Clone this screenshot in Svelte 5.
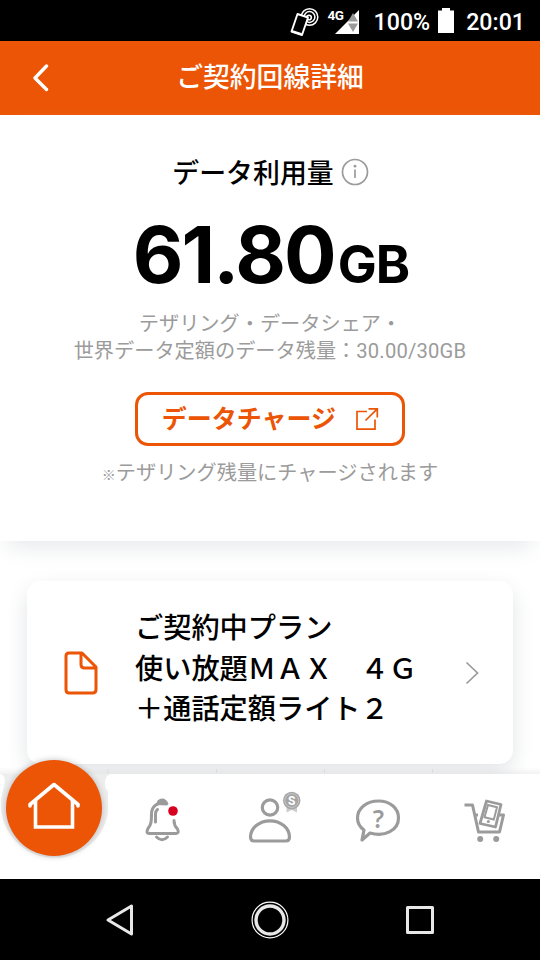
<script lang="ts">
  const usage = { amount: '61.80', unit: 'GB', remaining: '30.00/30GB' };
  const planLines = ['ご契約中プラン', '使い放題ＭＡＸ　４Ｇ', '＋通話定額ライト２'];
  const tabs = ['home', 'notice', 'account', 'support', 'shop'];
</script>

<div class="screen">
  <div class="status">
    <svg class="st-nfc" width="30" height="30" viewBox="0 0 30 30" fill="none" stroke="#fff">
      <circle cx="20.500" cy="11" r="8.300" stroke-width="1.500" />
      <circle cx="20.500" cy="11" r="5.400" stroke-width="1.500" />
      <circle cx="20" cy="11.500" r="2.300" stroke-width="1.600" />
      <path d="M8.500 8 19 11.500 13 29 2.500 25.500Z" fill="#000" stroke-width="1.900" stroke-linejoin="round" />
      <path d="M3 24 14 27.500 13 29.500 2.500 26.300Z" fill="#fff" stroke="none" />
    </svg>
    <span class="net">4G</span>
    <svg class="st-signal" width="24" height="24" viewBox="0 0 24 24">
      <path d="M0 24 24 0V24Z" fill="#fff" />
      <path d="M18 3 23 11.500H13ZM18 22 23 13.500H13Z" fill="#9a9a9a" />
    </svg>
    <span class="pct">100%</span>
    <svg class="st-battery" width="16" height="25" viewBox="0 0 16 25">
      <path d="M4 0H12V2.5H16V25H0V2.5H4Z" fill="#fff" />
    </svg>
    <span class="clock">20:01</span>
  </div>

  <header>
    <svg class="back" width="18" height="28" viewBox="0 0 18 28">
      <path d="M14.5 2 3 14 14.5 25.5" fill="none" stroke="#fff" stroke-width="3.4" stroke-linecap="round" stroke-linejoin="round" />
    </svg>
    <h1>ご契約回線詳細</h1>
  </header>

  <main>
    <section class="usage">
      <h2>
        <span>データ利用量</span>
        <svg width="28" height="28" viewBox="0 0 28 28" fill="none" stroke="#9b9b9b" stroke-width="1.7">
          <circle cx="14" cy="14" r="12.5" />
          <path d="M14 11.5V20" />
          <circle cx="14" cy="8.2" r="1.4" fill="#9b9b9b" stroke="none" />
        </svg>
      </h2>
      <p class="amount"><span class="value">{usage.amount}</span><span class="unit">{usage.unit}</span></p>
      <p class="sub">
        テザリング・データシェア・<br />世界データ定額のデータ残量：<span class="remain">{usage.remaining}</span>
      </p>
      <button class="charge">
        <span>データチャージ</span>
        <svg width="24" height="24" viewBox="0 0 24 24" fill="none" stroke="#eb5505" stroke-width="1.7">
          <path d="M12 4.5H2V22.2H20V12.5M13.5 1.8H22.3V10.5M22.3 1.8 10.5 13.5" />
        </svg>
      </button>
      <p class="note"><span class="mark">※</span>テザリング残量にチャージされます</p>
    </section>

    <section class="plan">
      <svg class="doc" width="34" height="44" viewBox="0 0 34 44" fill="none" stroke="#eb5505" stroke-width="3" stroke-linejoin="round">
        <path d="M5 2H18L32 16V38.5Q32 42 28.500 42H5Q2 42 2 38.500V5Q2 2 5 2ZM17 2V13.500Q17 17 20.500 17H32" />
      </svg>
      <p>
        {#each planLines as line}
          <span class="plan-line">{line}</span>
        {/each}
      </p>
      <svg class="chevron" width="14" height="24" viewBox="0 0 14 24">
        <path d="M1.500 1.500 12.500 12 1.500 22.500" fill="none" stroke="#9b9b9b" stroke-width="1.7" />
      </svg>
    </section>

    <nav>
      <svg class="nav-bg" width="540" height="126" viewBox="0 0 540 126">
        <defs>
          <linearGradient id="edge" x1="0" y1="0" x2="0" y2="1">
            <stop offset="0" stop-color="#000" stop-opacity="0" />
            <stop offset="1" stop-color="#000" stop-opacity="0.05" />
          </linearGradient>
        </defs>
        <path d="M0 14H540V21H0Z" fill="url(#edge)" />
        <path d="M108 16V20M216.500 16V20M324.500 16V20M432.500 16V20" stroke="#dcdddd" />
        <path d="M0 21H540V126H0Z" fill="#fff" />
        <path d="M0 21Q5 22 5 28L1 46A54 54 0 0 0 108 60V38Q105 36 105 30Q105 22 111 21Z" fill="#ededee" />
      </svg>
      {#each tabs as tab}
        <button class="tab {tab}" aria-label={tab}>
          {#if tab === 'home'}
            <span class="disc">
              <svg width="54" height="48" viewBox="0 0 54 48" fill="none" stroke="#fff" stroke-width="3.6">
                <path d="M3 24V22.500L27 2.500 51 22.500V24" stroke-linejoin="round" stroke-linecap="round" />
                <path d="M8.500 19V45H45.500V19" />
              </svg>
            </span>
          {:else if tab === 'notice'}
            <svg width="40" height="48" viewBox="0 0 40 48" fill="none" stroke="#9b9b9b" stroke-width="3" stroke-linecap="round">
              <path d="M24 6.500C16 4.500 9.500 9 9.500 17C9.500 25 9 28 6 31.500Q3.500 36.500 7 36.500H34Q37.500 36.500 35.500 32C33 29.500 32 27.500 32 23.500" />
              <path d="M14 8Q15 1.500 20 1.500Q24.500 1.500 26.500 7L25 8.500Z" fill="#9b9b9b" stroke="none" />
              <path d="M13.500 25V17Q13.500 14 15.500 12.500M14.500 40Q20 45.500 25.500 40" />
              <circle cx="31" cy="14" r="4.800" fill="#d7001e" stroke="none" />
            </svg>
          {:else if tab === 'account'}
            <svg width="54" height="54" viewBox="0 0 54 54" fill="none" stroke="#9b9b9b" stroke-width="3.200">
              <circle cx="22" cy="17.500" r="7.700" />
              <path d="M6 51Q2.500 51 2.500 47A19.500 16.200 0 0 1 41.500 47Q41.500 51 38 51Z" stroke-linejoin="round" />
              <path d="M38.500 16V22.500L43.700 20 49 22.500V16Z" fill="#ccc" stroke="none" />
              <circle cx="43.700" cy="10.500" r="8.700" fill="#a5a5a5" stroke="none" />
              <circle cx="43.700" cy="10.500" r="6.900" stroke="#d0d0d0" stroke-width="0.800" />
              <text x="43.700" y="14.800" text-anchor="middle" font-size="12" font-weight="700" fill="#fff" stroke="none">S</text>
            </svg>
          {:else if tab === 'support'}
            <svg width="46" height="46" viewBox="0 0 46 46" fill="none" stroke="#9b9b9b" stroke-width="3.200" stroke-linejoin="round">
              <path d="M9 32C4 28.500 2.500 24 2.500 20C2.500 10 12 3 23.500 3C35 3 43.500 10 43.500 20C43.500 32 30 39.500 15 35L7 42Z" />
              <text x="23.500" y="29.500" text-anchor="middle" font-size="24.500" font-weight="600" fill="#9b9b9b" stroke="none">?</text>
            </svg>
          {:else}
            <svg width="44" height="46" viewBox="0 0 44 46" fill="none" stroke="#9b9b9b" stroke-width="3">
              <path d="M1.500 7H9.500L15.500 34H36.500L40.500 17H36M11.500 17H15" stroke-linejoin="round" />
              <path d="M23.500 3 38 6.500 32.500 29 17 25.500Z" fill="#fff" stroke-width="2.800" stroke-linejoin="round" />
              <path d="M25 7 34 9.200 30.800 21.500 21.500 19.200Z" stroke-width="2" />
              <circle cx="25.300" cy="23.500" r="1.500" fill="#9b9b9b" stroke="none" />
              <circle cx="17.200" cy="41" r="3" fill="#9b9b9b" stroke="none" />
              <circle cx="33.200" cy="41" r="3" fill="#9b9b9b" stroke="none" />
            </svg>
          {/if}
        </button>
      {/each}
    </nav>
  </main>

  <div class="system">
    <svg width="40" height="40" viewBox="0 0 40 40" fill="none" stroke="#e8e8e8" stroke-width="3" stroke-linejoin="round">
      <path d="M31.500 6V34L8 20Z" />
    </svg>
    <svg width="40" height="40" viewBox="0 0 40 40" fill="none" stroke="#e8e8e8">
      <circle cx="20" cy="20" r="17.900" stroke-width="1.200" stroke="#fff" />
      <circle cx="20" cy="20" r="14" stroke-width="3.400" />
    </svg>
    <svg width="40" height="40" viewBox="0 0 40 40" fill="none" stroke="#e8e8e8" stroke-width="3" stroke-linejoin="round">
      <rect x="7.500" y="7.500" width="25" height="25" />
    </svg>
  </div>
</div>

<style>
  :global(body) { margin: 0; background: #000; }

  .screen {
    width: 540px;
    height: 960px;
    display: flex;
    flex-direction: column;
    overflow: hidden;
    background: #fff;
    font-family: "Noto Sans CJK JP", sans-serif;
    color: #000;
  }
  h1, h2, p { margin: 0; }
  button { padding: 0; border: 0; background: none; font: inherit; }
  svg { display: block; flex-shrink: 0; }

  /* Android status bar */
  .status {
    height: 41px;
    box-sizing: border-box;
    display: flex;
    align-items: center;
    justify-content: flex-end;
    padding-right: 15px;
    background: #000;
    color: #fff;
    font-family: Roboto, sans-serif;
    font-size: 23.200px;
    font-weight: 500;
  }
  .net {
    width: 16px;
    margin: 0 -9px 12px 9px;
    font-size: 13.500px;
    font-weight: 700;
    letter-spacing: -0.500px;
    z-index: 1;
  }
  .st-signal { margin-top: 3px; }
  .pct { margin: 2px 8px 0 15px; }
  .clock { margin: 2px 0 0 12px; }

  header {
    height: 74px;
    flex-shrink: 0;
    display: grid;
    grid-template-columns: 80px 1fr 80px;
    align-items: center;
    background: #eb5505;
    color: #fff;
  }
  .back { margin-left: 32px; }
  h1 {
    margin-top: -4px;
    text-align: center;
    font-size: 26.800px;
    line-height: 40px;
    font-weight: 500;
  }

  main { flex: 1; display: flex; flex-direction: column; position: relative; }

  .usage {
    height: 426px;
    box-sizing: border-box;
    padding-top: 37px;
    display: flex;
    flex-direction: column;
    align-items: center;
    background: #fff;
    box-shadow: 0 14px 22px -8px #e6e8ea;
  }
  h2 {
    display: flex;
    align-items: center;
    gap: 7px;
    height: 40px;
    font-size: 26.900px;
    font-weight: 500;
  }
  h2 span { margin: -2px 0 0 1px; }
  .amount {
    height: 92px;
    margin: 17px 0 0 2px;
    line-height: 92px;
    font-family: Inter, sans-serif;
    font-weight: 650;
    white-space: nowrap;
  }
  .value { font-size: 78px; letter-spacing: -1.900px; }
  .unit { font-size: 52px; letter-spacing: -1px; margin-left: 3px; }
  .sub {
    margin-top: 8px;
    text-align: center;
    font-size: 20.200px;
    line-height: 27px;
    color: #9b9b9b;
    white-space: nowrap;
  }
  .remain { font-family: Roboto, sans-serif; letter-spacing: 0.200px; }
  .charge {
    width: 270px;
    height: 54px;
    flex-shrink: 0;
    box-sizing: border-box;
    display: flex;
    align-items: center;
    justify-content: center;
    gap: 19px;
    margin-top: 27px;
    border: 3px solid #eb5505;
    border-radius: 13px;
    background: #fff;
    color: #eb5505;
    font-size: 25px;
    font-weight: 600;
  }
  .charge span { margin: -5px 0 0 1px; }
  .note {
    margin-top: 12px;
    font-size: 20.200px;
    line-height: 28px;
    color: #9b9b9b;
  }
  .mark { font-size: 14px; font-weight: 500; }

  .plan {
    height: 183px;
    box-sizing: border-box;
    display: flex;
    align-items: center;
    margin: 40px 27px 0;
    padding: 0 34px 0 37px;
    border-radius: 14px;
    background: #fff;
    box-shadow: 0 8px 22px #e2e4e6;
  }
  .plan p {
    flex: 1;
    margin: -11px 0 0 37px;
    font-size: 28.200px;
    line-height: 40.500px;
    font-weight: 500;
    white-space: nowrap;
  }
  .plan-line { display: block; }

  nav {
    position: absolute;
    left: 0;
    right: 0;
    bottom: 0;
    z-index: 1;
    height: 106px;
    display: grid;
    grid-template-columns: repeat(5, 1fr);
  }
  .nav-bg { position: absolute; left: 0; bottom: 0; z-index: -1; }
  .tab { display: flex; justify-content: center; align-items: flex-start; }
  .disc {
    width: 96px;
    height: 96px;
    flex-shrink: 0;
    display: flex;
    align-items: center;
    justify-content: center;
    margin-top: -13px;
    border-radius: 50%;
    background: #eb5505;
    box-shadow: 0 0 6px rgba(0, 0, 0, 0.25);
  }
  .disc svg { margin-top: -5px; }
  .notice svg { margin-top: 24px; }
  .account svg { margin: 17px 0 0 10px; }
  .account text { font-family: Roboto, sans-serif; }
  .support svg { margin-top: 25px; }
  .support text { font-family: "Noto Sans", sans-serif; }
  .shop svg { margin: 25px 0 0 -3px; }

  .system {
    height: 81px;
    display: flex;
    align-items: center;
    justify-content: center;
    gap: 110px;
    background: #000;
  }
</style>
